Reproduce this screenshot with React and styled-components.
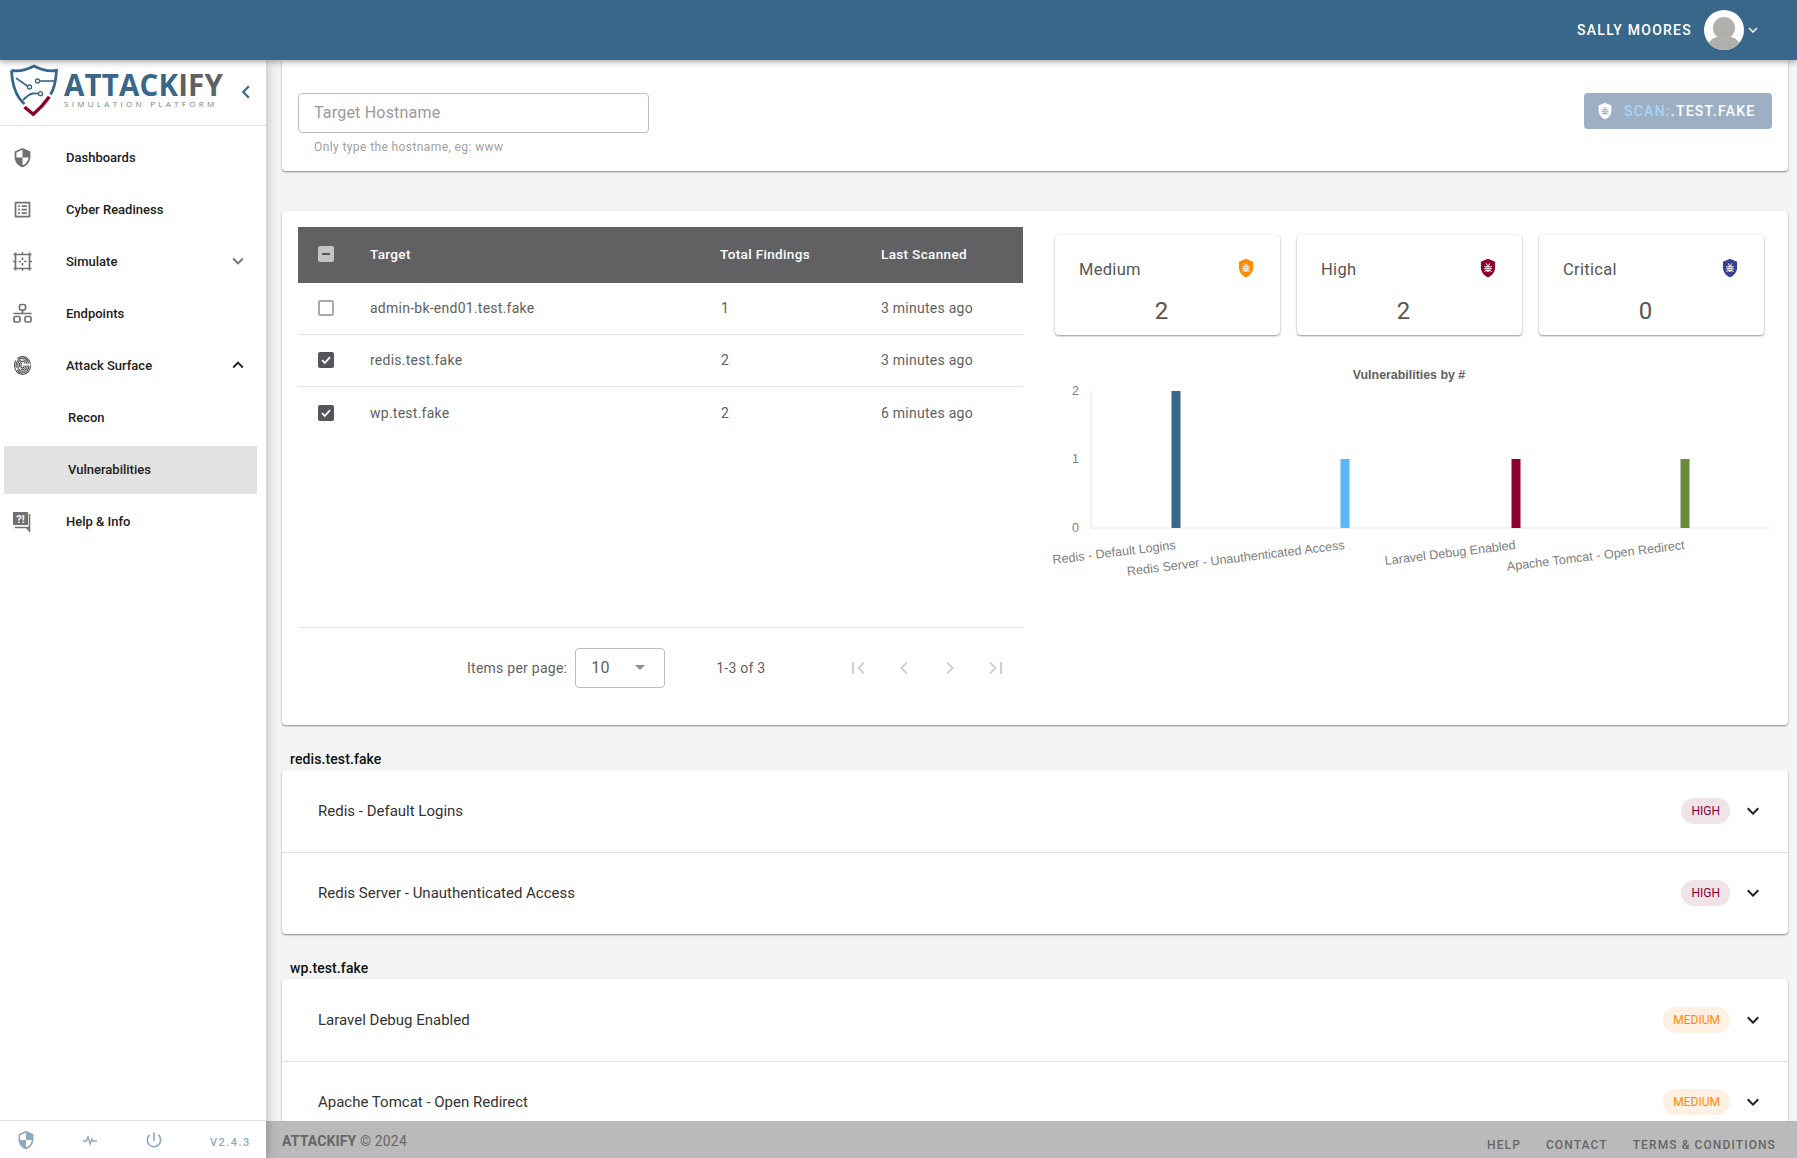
import React from "react";
import styled, { createGlobalStyle } from "styled-components";
import {
  MdExpandMore, MdExpandLess, MdChevronLeft, MdChevronRight, MdFirstPage, MdLastPage,
  MdSecurity, MdListAlt, MdPowerSettingsNew,
} from "react-icons/md";

const Global = createGlobalStyle`
  html, body { margin: 0; padding: 0; height: 100%; overflow: hidden; }
  body { font-family: Roboto, "Liberation Sans", sans-serif; background: #f4f4f4; color: #212121; }
  * { box-sizing: border-box; }
`;

const Page = styled.div`
  height: 100vh; display: flex; flex-direction: column; overflow: hidden;
`;
const Header = styled.header`
  height: 60px; flex: none; background: #39678a; z-index: 3; position: relative;
  box-shadow: 0 2px 6px rgba(0,0,0,.35);
  display: flex; align-items: center; justify-content: flex-end; padding-right: 35px; color: #fff;
`;
const UserName = styled.span`
  font-size: 14px; font-weight: 500; letter-spacing: 1.25px; margin-right: 12px;
`;
const Body = styled.div`flex: 1; min-height: 0; display: flex;`;
const Sidebar = styled.aside`
  width: 266px; flex: none; background: #fff; display: flex; flex-direction: column; z-index: 2;
  box-shadow: 0 0 12px rgba(0,0,0,.28); position: relative;
`;
const LogoBar = styled.div`
  height: 66px; flex: none; border-bottom: 1px solid #e2e2e2; display: flex; align-items: flex-start;
  padding: 4px 0 0 10px; position: relative;
`;
const LogoText = styled.div`display: flex; flex-direction: column; margin-left: 6px; padding-top: 6px;`;
const LogoName = styled.div`
  font-family: "Open Sans", sans-serif; font-size: 29.5px; line-height: 29px; font-weight: 700;
  letter-spacing: .15px; color: #39678a;
  span { color: #616161; }
`;
const LogoSub = styled.div`
  font-size: 8px; line-height: 10px; letter-spacing: 3.3px; color: #7d7d7d; font-weight: 400; white-space: nowrap;
  font-family: "Open Sans", sans-serif;
`;
const Collapse = styled.span`
  position: absolute; left: 233px; top: 19px; color: #39678a; font-size: 26px; line-height: 0;
`;
const Nav = styled.nav`flex: 1; display: flex; flex-direction: column; padding-top: 5px;`;
const NavItem = styled.div`
  height: 52px; flex: none; display: flex; align-items: center; padding-left: 12px; padding-right: 17px;
  font-size: 13px; font-weight: 500; color: #212121;
`;
const NavIcon = styled.span`
  width: 21px; height: 21px; flex: none; margin-right: 33px; color: #707070; font-size: 21px; display: flex;
`;
const NavCaret = styled.span`
  margin-left: auto; font-size: 22px; display: flex; color: ${p => p.$open ? "#212121" : "#757575"};
`;
const SubWrap = styled.div`height: 52px; flex: none; padding: 3px 9px 1px 4px;`;
const SubItem = styled.div`
  height: 48px; display: flex; align-items: center; padding: 0 0 2px 64px; font-size: 13px; font-weight: 500;
  background: ${p => p.$active ? "#e2e2e2" : "transparent"};
`;
const SideFoot = styled.div`
  height: 38px; flex: none; border-top: 1px solid #e2e2e2; display: flex; align-items: center;
  color: #8fa9c0; padding-left: 16px; position: relative;
`;
const FootIcon = styled.span`
  width: 20px; height: 20px; flex: none; margin-right: 44px; display: flex; font-size: 20px;
`;
const Version = styled.span`
  font-size: 11px; letter-spacing: 1.45px; font-weight: 500; margin: 6px 0 0 2px;
`;
const MainCol = styled.div`flex: 1; min-width: 0; display: flex; flex-direction: column;`;
const Content = styled.main`flex: 1; min-height: 0; overflow: hidden; padding: 0 9px 0 16px;`;
const Card = styled.section`
  background: #fff; border-radius: 0 0 4px 4px; box-shadow: 0 1px 2px rgba(0,0,0,.45);
`;
const ScanCard = styled(Card)`
  height: 111px; padding: 33px 16px 0; display: flex; justify-content: space-between; align-items: flex-start;
`;
const Field = styled.div`display: flex; flex-direction: column;`;
const Input = styled.input`
  width: 351px; height: 40px; border: 1px solid #bdbdbd; border-radius: 4px; padding: 0 15px 2px; outline: none;
  font: 400 16px Roboto, sans-serif; letter-spacing: .2px; color: #212121;
  &::placeholder { color: #9a9a9a; opacity: 1; }
`;
const Helper = styled.div`
  font-size: 12px; letter-spacing: .4px; color: #a0a0a0; margin: 7px 0 0 16px; line-height: 14px;
`;
const ScanButton = styled.button`
  width: 188px; height: 36px; border: 0; border-radius: 4px; background: #9db0c3; color: #fff; display: flex; align-items: center;
  padding: 0 0 0 12px; font: 500 14px Roboto, sans-serif; letter-spacing: 1.25px; white-space: nowrap;
  svg { margin-right: 10px; }
  em { font-style: normal; color: #a6d4fa; }
`;
const TableCard = styled(Card)`
  margin-top: 40px; height: 514px; padding: 16px 0 16px 16px; display: flex; border-radius: 4px;
`;
const TableCol = styled.div`width: 725px; flex: none; display: flex; flex-direction: column;`;
const THead = styled.div`
  height: 56px; background: #616163; color: #fff; display: grid; grid-template-columns: 72px 350px 161px 1fr; align-items: center;
  font-size: 13.5px; font-weight: 500; letter-spacing: .35px; padding-bottom: 2px;
`;
const Rows = styled.div`flex: 1; border-bottom: 1px solid #e8e8e8;`;
const TRow = styled.div`
  height: 52px; display: grid; grid-template-columns: 72px 351px 160px 1fr; align-items: center; padding-bottom: 1px;
  border-bottom: ${p => p.$last ? "0" : "1px solid #e2e2e2"}; font-size: 14px; letter-spacing: .25px; color: #616161;
`;
const CheckCell = styled.div`padding-left: 20px; display: flex;`;
const Box = styled.span`
  width: 16px; height: 16px; border-radius: 2px; display: flex; align-items: center; justify-content: center;
  background: ${p => p.$state === "on" ? "#55555a" : p.$state === "mixed" ? "#c4c4c6" : "#fff"};
  border: ${p => p.$state === "off" ? "2px solid #aaa" : "0"};
`;
const Paginator = styled.div`
  height: 81px; flex: none; display: flex; align-items: center; padding: 0 15px 2px 169px; font-size: 14px; color: #616161; letter-spacing: .25px;
`;
const SelectBox = styled.div`
  width: 90px; height: 40px; margin-left: 8px; border: 1px solid #bdbdbd; border-radius: 4px; display: flex; align-items: center;
  padding: 0 19px 0 15px; font-size: 16px; justify-content: space-between;
`;
const Caret = styled.span`
  width: 0; height: 0; border-left: 5px solid transparent; border-right: 5px solid transparent; border-top: 5px solid #8f8f8f;
`;
const Range = styled.span`margin-left: 51px;`;
const PageIcons = styled.div`
  margin-left: auto; display: flex; gap: 22px; color: #cfcfcf; font-size: 24px;
  svg { display: block; }
`;
const Side = styled.div`flex: 1; min-width: 0; padding-left: 32px; display: flex; flex-direction: column;`;
const Stats = styled.div`
  display: grid; grid-template-columns: repeat(3, 225px); gap: 17px; padding: 8px 0 0 0;
`;
const Stat = styled.div`
  height: 100px; background: #fff; border-radius: 4px; box-shadow: 0 1px 2px rgba(0,0,0,.4), 0 0 3px rgba(0,0,0,.06);
  display: flex; flex-direction: column; padding: 22px 24px 0;
`;
const StatTop = styled.div`
  display: flex; justify-content: space-between; align-items: center; font-size: 16.5px; letter-spacing: .3px; color: #565656; height: 24px;
  svg { margin-top: -2px; }
`;
const StatValue = styled.div`
  text-align: center; font-size: 24px; line-height: 28px; color: #565656; margin-top: 16px; padding-right: 12px;
`;
const Chart = styled.svg`display: block; width: 749px; height: 230px; margin: 25px 0 0 -16px; flex: none;`;
const GroupLabel = styled.h4`
  margin: 0; font-size: 14px; font-weight: 500; line-height: 16px; letter-spacing: .1px; color: #111; padding: 26px 0 3px 8px;
`;
const FindingCard = styled(Card)`border-radius: 4px;`;
const Finding = styled.div`
  height: 82px; display: flex; align-items: center; padding: 0 23px 0 36px; font-size: 15px; color: #333;
  & + & { border-top: 1px solid #e2e2e2; padding-bottom: 2px; }
`;
const Chip = styled.span`
  margin-left: auto; height: 26px; padding: 0 10px; border-radius: 13px; font-size: 12px; line-height: 26px;
  color: ${p => p.$level === "high" ? "#8c0032" : "#ff8c00"};
  background: ${p => p.$level === "high" ? "#f0e4e9" : "#fef0e2"};
`;
const Expand = styled.span`margin-left: 11px; font-size: 24px; display: flex; color: #212121;`;
const Footer = styled.footer`
  height: 37px; flex: none; background: #bababa; display: flex; align-items: flex-start; padding: 0 21px 0 16px; color: #666; position: relative; z-index: 1;
`;
const Copy = styled.span`font-size: 14px; line-height: 40px; letter-spacing: .15px; b { font-weight: 700; }`;
const FootLinks = styled.div`
  margin-left: auto; display: flex; gap: 25px; font-size: 12px; font-weight: 500; letter-spacing: 1.1px; line-height: 48px;
`;

const BugShield = ({ color, bug = "#fff", size = 20 }) => (
  <svg width={size} height={size} viewBox="0 0 24 24">
    <path fill={color} d="M12 1 3.5 4.5v6.5c0 5.5 3.6 10.6 8.500 12 4.900-1.400 8.500-6.500 8.500-12V4.500z" />
    <g stroke={bug} strokeWidth="1.2" fill={bug}>
      <rect x="9.4" y="8.6" width="5.2" height="8" rx="2.4" stroke="none" />
      <path fill="none" d="M7.500 10l2 1M16.500 10l-2 1M7.300 13h9.400M7.500 16.500l2-1.500M16.500 16.500l-2-1.500M10 6.500l1 2M14 6.500l-1 2" />
    </g>
    <path stroke={color} strokeWidth=".8" d="M9.400 11.200h5.200M9.400 13.600h5.200" />
  </svg>
);

const SimulateIcon = () => (
  <svg width="21" height="21" viewBox="0 0 21 21" fill="none" stroke="currentColor" strokeWidth="1.7">
    <path d="M1.500 3.500h18M1.500 17.500h18M3.500 1.500v18M17.500 1.500v18" />
    <path d="M10.500 1v2.500M10.500 17.500V20M1 10.500h2.500M17.500 10.500H20" strokeWidth="1.300" />
    <path d="M10.500 6.500v2.400M10.500 12.100v2.400M6.500 10.500h2.400M12.100 10.500h2.400" />
  </svg>
);

const FingerIcon = () => (
  <svg width="21" height="21" viewBox="0 0 21 21" fill="none" stroke="#484848" strokeWidth="1.050">
    <ellipse cx="10.500" cy="10.500" rx="8" ry="9" pathLength="100" strokeDasharray="60 4 34 2" />
    <ellipse cx="10.500" cy="10.500" rx="6.400" ry="7.400" pathLength="100" strokeDasharray="40 5 50 5" />
    <ellipse cx="10.500" cy="10.500" rx="4.800" ry="5.800" pathLength="100" strokeDasharray="70 6 20 4" />
    <ellipse cx="10.500" cy="10.500" rx="3.200" ry="4.200" pathLength="100" strokeDasharray="35 7 50 8" />
    <ellipse cx="10.500" cy="10.500" rx="1.600" ry="2.600" pathLength="100" strokeDasharray="70 30" />
  </svg>
);

const LanIcon = () => (
  <svg width="21" height="21" viewBox="0 0 21 21" fill="none" stroke="currentColor" strokeWidth="1.7">
    <rect x="7.500" y="1.500" width="6" height="5.500" rx="1.600" />
    <rect x="2" y="13.500" width="6" height="5.500" rx="1.600" />
    <rect x="13" y="13.500" width="6" height="5.500" rx="1.600" />
    <path d="M10.500 7v3.500M1.500 10.500h18" />
  </svg>
);

const HelpIcon = () => (
  <svg width="21" height="21" viewBox="0 0 21 21">
    <rect x="1" y="1" width="15" height="13" fill="currentColor" />
    <path d="M3 16.500h14.500V3M17.500 16.500v3.500l-3-3.500" fill="none" stroke="currentColor" strokeWidth="1.500" />
    <text x="8.500" y="11.500" textAnchor="middle" fontFamily="Roboto, sans-serif" fontWeight="700" fontSize="11" fill="#fff">?!</text>
  </svg>
);

const PulseIcon = () => (
  <svg width="20" height="20" viewBox="0 0 20 20" fill="none" stroke="currentColor" strokeWidth="1.400">
    <path d="M3 11h3.500l1.500-4 2.200 7 1.700-5 1 2h4" />
  </svg>
);

const Avatar = () => (
  <svg width="40" height="40" viewBox="0 0 40 40">
    <defs><clipPath id="av"><circle cx="20" cy="20" r="20" /></clipPath></defs>
    <circle cx="20" cy="20" r="20" fill="#fff" />
    <g clipPath="url(#av)">
      <circle cx="20" cy="18" r="11" fill="#b1afac" />
      <path d="M3 40c0-8 6-13 11-13 3 2 9 2 12 0 5 0 11 5 11 13z" fill="#b1afac" />
    </g>
  </svg>
);

const Logo = () => (
  <svg width="48" height="56" viewBox="11 63 48 56" style={{ flex: "none" }}>
    <g fill="none" stroke="#39678a">
      <path strokeWidth="2.800" d="M12.500 69.500c9 1.500 16-1 22.500-4.500 6.500 3.500 13.500 6 22.500 4.500-.5 9-1.500 17-6 24" />
      <path strokeWidth="2.800" d="M12.500 69.500c.5 11 3 21 8 28 1.500 2 3 4 5 5.500" />
      <path strokeWidth="1.600" d="M17 77l12 8.500" />
      <path strokeWidth="1.600" d="M40 80h15" />
      <path strokeWidth="1.800" d="M24 99c3-3 6-6 10-6.500 2-.2 4 0 6 .2" />
      <circle cx="30.500" cy="86" r="2" fill="#fff" strokeWidth="1.300" />
      <circle cx="38.500" cy="80" r="2" fill="#fff" strokeWidth="1.300" />
      <circle cx="41.500" cy="92.700" r="2" fill="#fff" strokeWidth="1.300" />
    </g>
    <path d="M25.500 106l8.800 7.300c6-5 11.500-11 16-17.500" fill="none" stroke="#8c0032" strokeWidth="3.400" />
  </svg>
);

const rows = [
  { name: "admin-bk-end01.test.fake", total: 1, when: "3 minutes ago", state: "off" },
  { name: "redis.test.fake", total: 2, when: "3 minutes ago", state: "on" },
  { name: "wp.test.fake", total: 2, when: "6 minutes ago", state: "on", last: true },
];
const stats = [
  { label: "Medium", value: 2, color: "#ff8c00" },
  { label: "High", value: 2, color: "#8c0032" },
  { label: "Critical", value: 0, color: "#3a3f8f" },
];
const bars = [
  { x: 1176, h: 137, color: "#39678a", label: "Redis - Default Logins" },
  { x: 1345, h: 69, color: "#5bb8fb", label: "Redis Server - Unauthenticated Access" },
  { x: 1516, h: 69, color: "#8c0032", label: "Laravel Debug Enabled" },
  { x: 1685, h: 69, color: "#6a8a3a", label: "Apache Tomcat - Open Redirect" },
];

const Check = ({ state }) => (
  <Box $state={state}>
    {state === "on" && <svg width="12" height="12" viewBox="0 0 12 12"><path d="M2 6.200l2.800 2.800L10 3.200" fill="none" stroke="#fff" strokeWidth="1.800" /></svg>}
    {state === "mixed" && <svg width="10" height="10" viewBox="0 0 10 10"><path d="M1 5h8" stroke="#55555a" strokeWidth="2" /></svg>}
  </Box>
);

const Row = ({ title, level }) => (
  <Finding>
    {title}
    <Chip $level={level}>{level.toUpperCase()}</Chip>
    <Expand><MdExpandMore /></Expand>
  </Finding>
);

export default function App() {
  return (
    <Page>
      <Global />
      <Header>
        <UserName>SALLY MOORES</UserName>
        <Avatar />
        <MdExpandMore size={18} />
      </Header>
      <Body>
        <Sidebar>
          <LogoBar>
            <Logo />
            <LogoText>
              <LogoName>ATTACK<span>IFY</span></LogoName>
              <LogoSub>SIMULATION PLATFORM</LogoSub>
            </LogoText>
            <Collapse><MdChevronLeft /></Collapse>
          </LogoBar>
          <Nav>
            <NavItem><NavIcon><MdSecurity /></NavIcon>Dashboards</NavItem>
            <NavItem><NavIcon><MdListAlt /></NavIcon>Cyber Readiness</NavItem>
            <NavItem><NavIcon><SimulateIcon /></NavIcon>Simulate<NavCaret><MdExpandMore /></NavCaret></NavItem>
            <NavItem><NavIcon><LanIcon /></NavIcon>Endpoints</NavItem>
            <NavItem><NavIcon><FingerIcon /></NavIcon>Attack Surface<NavCaret $open><MdExpandLess /></NavCaret></NavItem>
            <SubWrap><SubItem>Recon</SubItem></SubWrap>
            <SubWrap><SubItem $active>Vulnerabilities</SubItem></SubWrap>
            <NavItem><NavIcon><HelpIcon /></NavIcon>Help &amp; Info</NavItem>
          </Nav>
          <SideFoot>
            <FootIcon><MdSecurity /></FootIcon>
            <FootIcon><PulseIcon /></FootIcon>
            <FootIcon><MdPowerSettingsNew /></FootIcon>
            <Version>V2.4.3</Version>
          </SideFoot>
        </Sidebar>
        <MainCol>
          <Content>
            <ScanCard>
              <Field>
                <Input placeholder="Target Hostname" />
                <Helper>Only type the hostname, eg: www</Helper>
              </Field>
              <ScanButton>
                <BugShield color="#fff" bug="#9db0c3" size={18} />
                <em>SCAN:</em>.TEST.FAKE
              </ScanButton>
            </ScanCard>
            <TableCard>
              <TableCol>
                <THead>
                  <CheckCell><Check state="mixed" /></CheckCell>
                  <span>Target</span>
                  <span>Total Findings</span>
                  <span>Last Scanned</span>
                </THead>
                <Rows>
                  {rows.map(r => (
                    <TRow key={r.name} $last={r.last}>
                      <CheckCell><Check state={r.state} /></CheckCell>
                      <span>{r.name}</span>
                      <span>{r.total}</span>
                      <span>{r.when}</span>
                    </TRow>
                  ))}
                </Rows>
                <Paginator>
                  Items per page:
                  <SelectBox>10<Caret /></SelectBox>
                  <Range>1-3 of 3</Range>
                  <PageIcons><MdFirstPage /><MdChevronLeft /><MdChevronRight /><MdLastPage /></PageIcons>
                </Paginator>
              </TableCol>
              <Side>
                <Stats>
                  {stats.map(s => (
                    <Stat key={s.label}>
                      <StatTop>{s.label}<BugShield color={s.color} /></StatTop>
                      <StatValue>{s.value}</StatValue>
                    </Stat>
                  ))}
                </Stats>
                <Chart viewBox="1039 360 749 230">
                  <text x="1409" y="378.500" textAnchor="middle" fontFamily="Liberation Sans, sans-serif" fontWeight="700" fontSize="12.400" fill="#616161">Vulnerabilities by #</text>
                  <path d="M1091 391V528H1770" fill="none" stroke="#e4e4e4" />
                  {[["2", 395], ["1", 463], ["0", 532]].map(([t, y]) => (
                    <text key={t} x="1079" y={y} textAnchor="end" fontFamily="Liberation Sans, sans-serif" fontSize="12.500" fill="#808080">{t}</text>
                  ))}
                  {bars.map(b => (
                    <g key={b.label}>
                      <rect x={b.x - 4.5} y={528 - b.h} width="9" height={b.h} fill={b.color} />
                      <text x={b.x} y="549" textAnchor="end" transform={`rotate(-7 ${b.x} 549)`} fontFamily="Liberation Sans, sans-serif" fontSize="12.600" fill="#808080">{b.label}</text>
                    </g>
                  ))}
                </Chart>
              </Side>
            </TableCard>
            <GroupLabel>redis.test.fake</GroupLabel>
            <FindingCard>
              <Row title="Redis - Default Logins" level="high" />
              <Row title="Redis Server - Unauthenticated Access" level="high" />
            </FindingCard>
            <GroupLabel>wp.test.fake</GroupLabel>
            <FindingCard>
              <Row title="Laravel Debug Enabled" level="medium" />
              <Row title="Apache Tomcat - Open Redirect" level="medium" />
            </FindingCard>
          </Content>
          <Footer>
            <Copy><b>ATTACKIFY</b> © 2024</Copy>
            <FootLinks><span>HELP</span><span>CONTACT</span><span>TERMS &amp; CONDITIONS</span></FootLinks>
          </Footer>
        </MainCol>
      </Body>
    </Page>
  );
}
